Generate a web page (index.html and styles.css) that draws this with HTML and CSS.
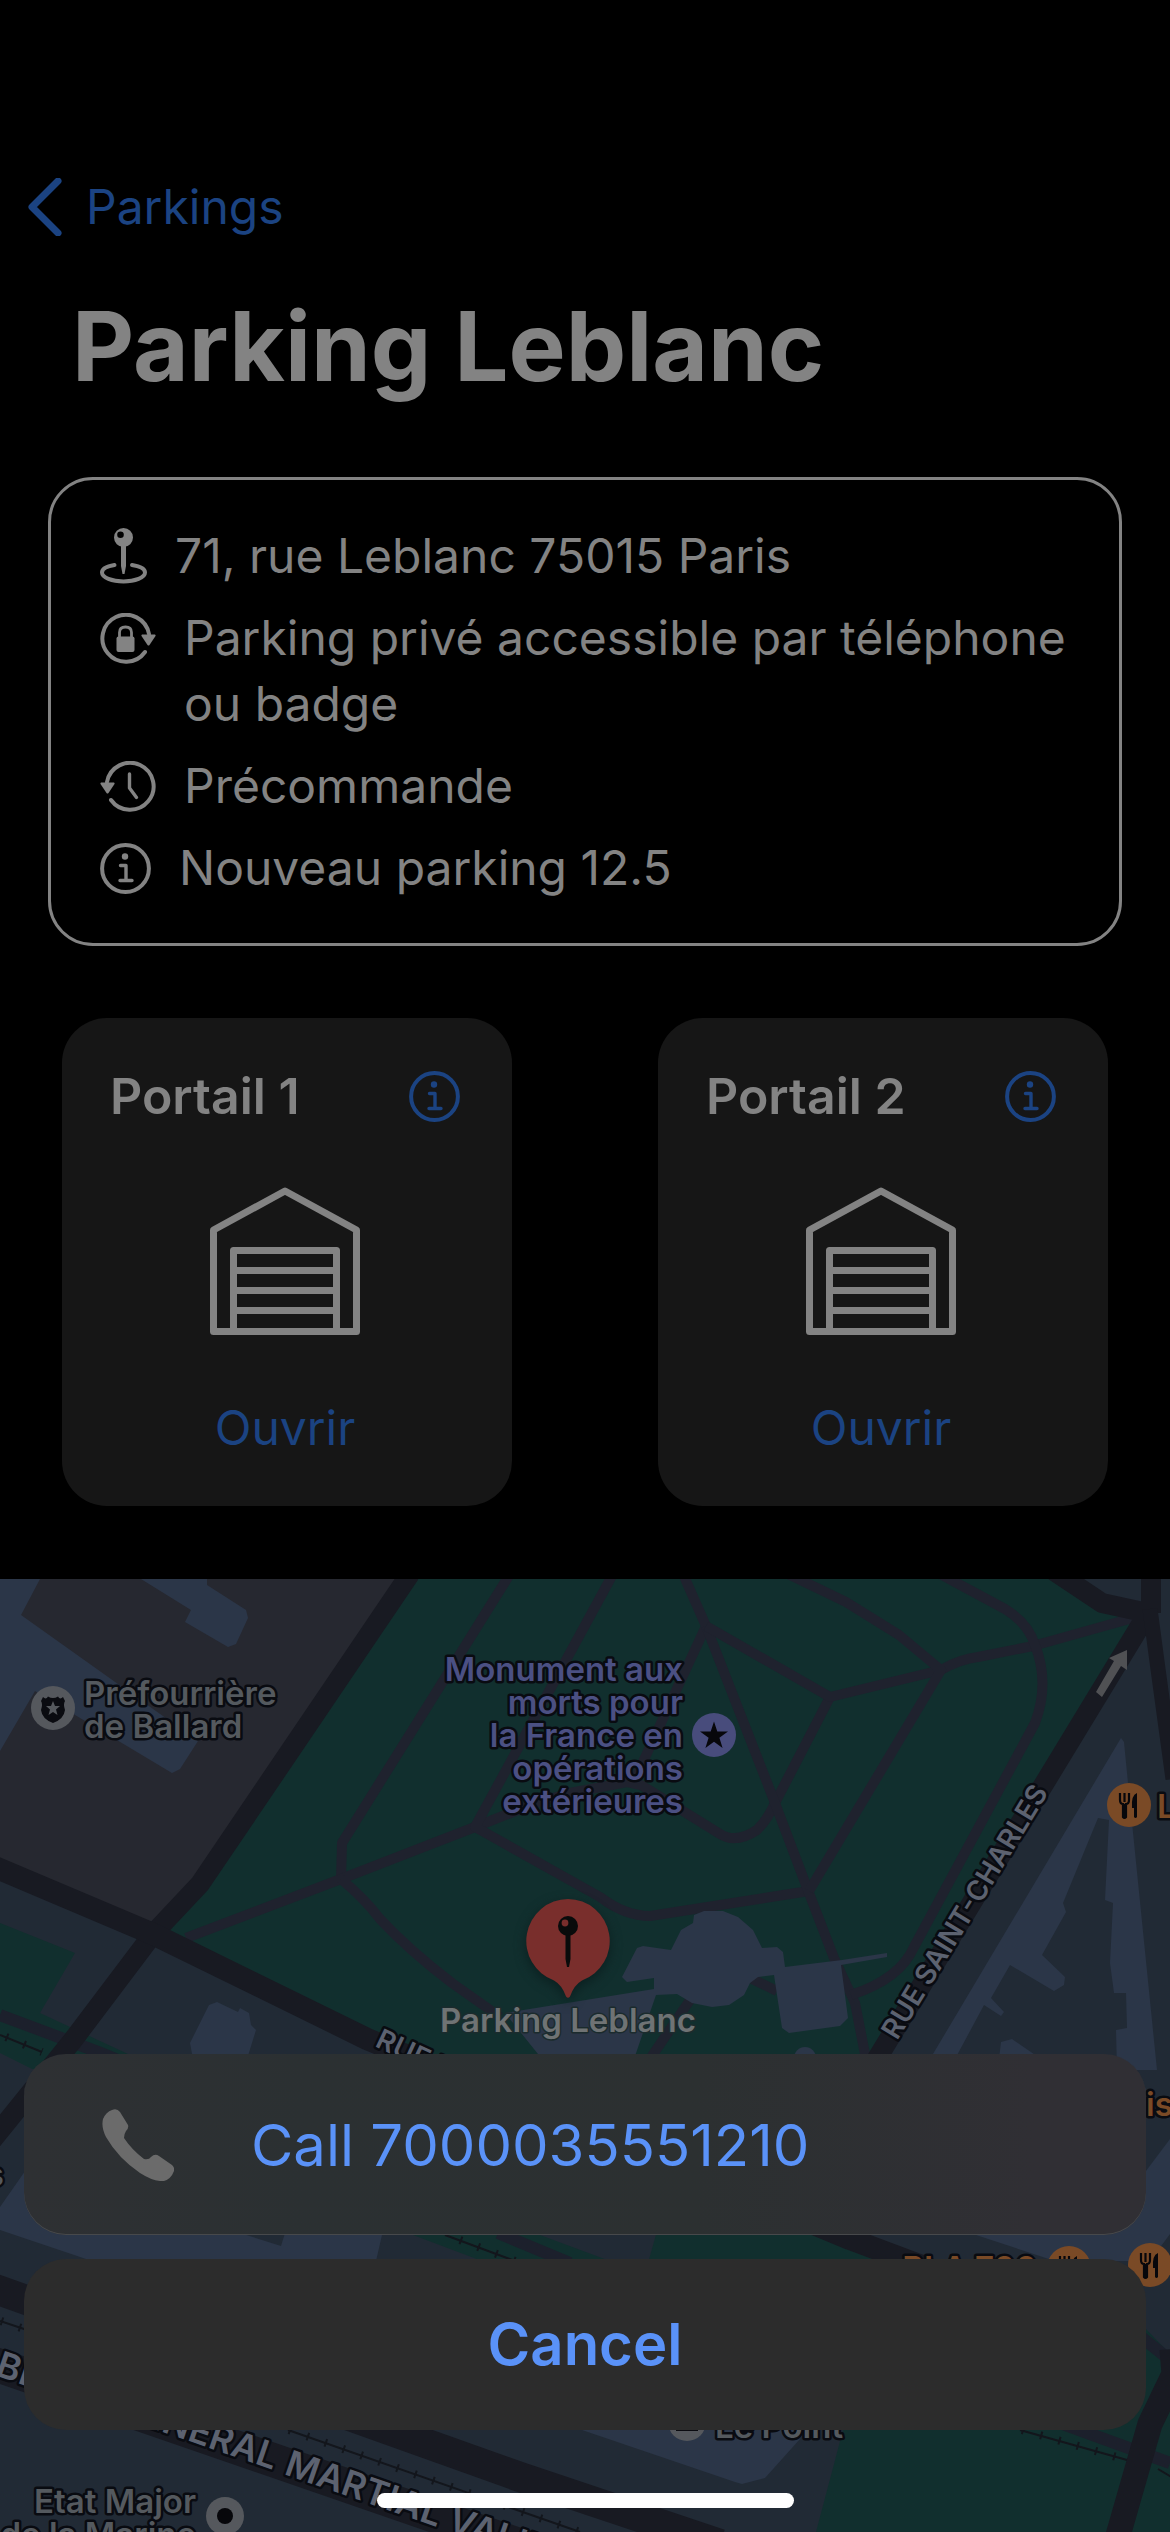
FILE: index.html
```html
<!DOCTYPE html>
<html lang="fr">
<head>
<meta charset="utf-8">
<meta name="viewport" content="width=device-width, initial-scale=1">
<title>Parking Leblanc</title>
<link rel="stylesheet" href="styles.css">
</head>
<body>
<svg class="defs" aria-hidden="true">
  <symbol id="info" viewBox="0 0 51 51">
    <circle cx="25.500" cy="25.500" r="23.400" fill="none" stroke="currentColor" stroke-width="4"/>
    <circle cx="25" cy="13.500" r="3.200" fill="currentColor"/>
    <path d="M20.500 22.500H26V37M20 37.500H32" fill="none" stroke="currentColor" stroke-width="3.400" stroke-linecap="round" stroke-linejoin="round"/>
  </symbol>
  <symbol id="garage" viewBox="0 0 150 150">
    <path d="M3.500 43 75 4 146.500 43V144.500H3.500ZM23.500 144V63.500H126.500V144M23.500 83.500H126.500M23.500 103.500H126.500M23.500 123.500H126.500" fill="none" stroke="currentColor" stroke-width="7" stroke-linejoin="round"/>
  </symbol>
  <symbol id="fork" viewBox="-22 -22 44 44">
    <circle r="22" fill="#7a4a26"/>
    <path d="M-9-12V-5Q-9-1-6-1V12Q-4.500 14-3 12V-1Q0-1 0-5V-12M-4.500-12V-3" fill="none" stroke="#07070b" stroke-width="2.200"/>
    <path d="M-6-1H-3V12Q-4.500 14-6 12ZM8-12V12Q6.500 14 5 12V3H3Q2-10 8-12Z" fill="#07070b"/>
  </symbol>
</svg>

<main class="screen">
  <nav class="nav">
    <a class="back" href="#">
      <svg class="chevron" viewBox="0 0 34 58" aria-hidden="true"><path d="M30 3 4 29 30 55" fill="none" stroke="currentColor" stroke-width="7" stroke-linecap="round" stroke-linejoin="round"/></svg>
      Parkings
    </a>
  </nav>
  <h1 class="title">Parking Leblanc</h1>

  <ul class="details">
    <li class="detail">
      <svg class="icon icon-pin" viewBox="0 0 47 56" aria-hidden="true">
        <path d="M14.500 37C7 38.300 2 41 2 44.500C2 49.500 12 53.500 23.500 53.500S45 49.500 45 44.500C45 41 40 38.300 32 37" fill="none" stroke="currentColor" stroke-width="4" stroke-linecap="round"/>
        <path d="M21 17h5V38L24.500 46h-2L21 38Z" fill="currentColor"/>
        <path fill-rule="evenodd" d="M23.500 0a9.500 9.500 0 1 1 0 19a9.500 9.500 0 0 1 0-19ZM20.500 3.500a3.300 3.300 0 1 0 0 6.600a3.300 3.300 0 0 0 0-6.600Z" fill="currentColor"/>
      </svg>
      <span>71, rue Leblanc 75015 Paris</span>
    </li>
    <li class="detail">
      <svg class="icon icon-wide" viewBox="0 0 56 52" aria-hidden="true">
        <path d="M49 21A23.500 23.500 0 1 0 45 39" fill="none" stroke="currentColor" stroke-width="4" stroke-linecap="round"/>
        <path d="M42 21.500H55Q56 22 55.500 23L49.500 32Q48.500 33 47.500 32L41.500 23Q41 22 42 21.500Z" fill="currentColor"/>
        <rect x="16.500" y="23.500" width="18" height="15.500" rx="2" fill="currentColor"/>
        <path d="M19.500 25V19.500Q19.500 14 25.500 14T31.500 19.500V25" fill="none" stroke="currentColor" stroke-width="2.800"/>
      </svg>
      <span>Parking privé accessible par téléphone ou badge</span>
    </li>
    <li class="detail">
      <svg class="icon icon-wide" viewBox="0 0 56 52" aria-hidden="true">
        <path d="M7 21A23.500 23.500 0 1 1 11 39" fill="none" stroke="currentColor" stroke-width="4" stroke-linecap="round"/>
        <path d="M1 21.500H14Q15 22 14.500 23L8.500 32Q7.500 33 6.500 32L.5 23Q0 22 1 21.500Z" fill="currentColor"/>
        <path d="M29.500 13V27L36.500 36.500" fill="none" stroke="currentColor" stroke-width="3.400" stroke-linecap="round" stroke-linejoin="round"/>
      </svg>
      <span>Précommande</span>
    </li>
    <li class="detail">
      <svg class="icon icon-info" aria-hidden="true"><use href="#info"/></svg>
      <span>Nouveau parking 12.5</span>
    </li>
  </ul>

  <div class="gates">
    <section class="gate">
      <header class="gate-head">
        <h2 class="gate-name">Portail 1</h2>
        <button class="gate-info" type="button" aria-label="Informations Portail 1"><svg class="icon icon-info" aria-hidden="true"><use href="#info"/></svg></button>
      </header>
      <svg class="garage" aria-hidden="true"><use href="#garage"/></svg>
      <button class="open" type="button">Ouvrir</button>
    </section>
    <section class="gate">
      <header class="gate-head">
        <h2 class="gate-name">Portail 2</h2>
        <button class="gate-info" type="button" aria-label="Informations Portail 2"><svg class="icon icon-info" aria-hidden="true"><use href="#info"/></svg></button>
      </header>
      <svg class="garage" aria-hidden="true"><use href="#garage"/></svg>
      <button class="open" type="button">Ouvrir</button>
    </section>
  </div>

  <svg class="map" viewBox="0 0 1170 953" preserveAspectRatio="xMidYMin slice" role="img" aria-label="Plan du quartier">
    <rect width="1170" height="953" fill="#212a35"/>
    <!-- districts -->
    <path fill="#262830" d="M0 0H400L192 304 150 346 0 283Z"/>
    <!-- green areas -->
    <g fill="#112f2e">
      <path d="M418 0H1064L1102 23 1144 34 875 478 560 560 380 460 168 352 208 304Z"/>
      <path d="M0 344 75 374 40 434 70 448 128 475V490H32L0 474Z"/>
      <path d="M413 656H540L610 682H482Z"/>
      <path d="M657 652H805L890 684H648Z"/>
      <path d="M843 851 880 700 1146 750 1170 775V953H816Z"/>
    </g>
    <!-- buildings -->
    <g fill="#2b3648">
      <path d="M0 0H40L21 36 198 162 180 190 172 194 35 112 0 172Z"/>
      <path d="M141 0H207V6L246 31 248 39 236 65 228 68 185 43 191 31Z"/>
      <path d="M209 426 217 423 238 433 240 429 249 434 251 446 256 451 247 480H193L190 464Z"/>
      <path d="M1121 159 1124 163 1128 204 1157 491H1117L1116 451 1127 449 1126 414H1114L1110 384 1113 324 1105 321 1109 241 1098 239 1063 324 1066 333 1042 376 1065 398 1064 406 1054 412 1010 386 991 419 1004 433 1001 437 984 426 955 480H930Z"/>
      <path d="M999 480 1001 463 1012 460 1041 480Z"/>
      <path fill-rule="evenodd" d="M0 628 30 585H400L382 656 376 682H92L0 651ZM240 654 281 667 285 654Z"/>
      <path d="M976 656 1055 682H1150L1170 655V560L1140 600Z"/>
      <path d="M582 851 735 903 742 905 765 899 800 860 806 851Z"/>
    </g>
    <!-- park paths -->
    <g fill="none" stroke="#1f222e" stroke-width="10" stroke-linejoin="round">
      <path d="M510-5 342 264 341 300"/>
      <path d="M186 359 341 300 475 248 536 224 570 214 627 203 641 206 720 255Q736 265 757 251Q768 240 775 224L830 118"/>
      <path d="M613-5 475 248 600 318Q625 337 650 337L809 312"/>
      <path d="M341 300Q365 320 380 340 410 372 452 404L500 438"/>
      <path d="M683-5 706 47 635 200"/>
      <path d="M706 47 775 224 809 314 834 379 855 424 866 480"/>
      <path d="M706 47 830 118 941 91Q960 80 978 78L1033 67 1140 37"/>
      <path d="M788-5 846 23 899 56 941 91 809 312"/>
      <path d="M940-5 1005 30Q1028 44 1035 66 1050 104 1035 144L914 368Q900 400 851 416"/>
      <path d="M692 418 650 480M750 399 777 412"/>
    </g>
    <g fill="none" stroke="#1c202c" stroke-width="12">
      <path d="M0 436 101 474 130 486M498 654 570 684M1140 757 1175 785M1060 844 1170 884"/>
    </g>
    <g fill="#2b3648">
      <path d="M637 369 643 367 671 371 681 351 693 344 694 336 704 332H723L738 338 753 351 762 369 777 368 783 373 785 388 842 381 887 374V378L841 386 848 439 840 447 789 454 782 449 774 396 758 398 750 404 744 416 729 426 712 428 692 424 677 415 656 416 634 480H542L505 434 654 410V399L627 403 622 398Z"/>
      <circle cx="805" cy="479" r="11"/>
    </g>
    <!-- roads -->
    <g fill="none" stroke="#181a22" stroke-width="20" stroke-linejoin="round">
      <path d="M410-5 200 305 153 355 73 461-15 570"/>
      <path stroke-width="22" d="M-10 286 153 355 367 460 850 660 930 690"/>
      <path d="M1054-8 1102 24 1148 34 875 483M1151-5V34"/>
      <path stroke-width="15" d="M1150 30 1158 90 1173 200"/>
      <path stroke-width="30" d="M-10 708 380 848 520 898 720 965"/>
      <path stroke-width="34" d="M-20 780 600 994"/>
      <path stroke-width="25" d="M1172 770 1174 795 1150 845 1117 960"/>
    </g>
    <!-- railway -->
    <g fill="none" stroke="#13161c">
      <path stroke-width="2" d="M0 456 42 473M0 742 30 752M288 851 580 953M445 656 515 682M1020 851 1127 881M1158 890 1175 900"/>
      <path stroke-width="8" stroke-dasharray="2 17" d="M6 458 42 473M1 742 30 752M289 851 580 953M460 661 515 682M1022 851 1127 881"/>
    </g>
    <!-- one-way arrow -->
    <path fill="#505154" d="M1096 113 1114 82 1109 79 1127 71 1127 91 1121 87 1102 118Z"/>

    <g class="label label-road">
      <text transform="translate(897 462) rotate(-58.600)" class="street-small">RUE SAINT-CHARLES</text>
      <text transform="translate(374 467) rotate(25)" class="street-small">RUE LEBLANC</text>
      <text transform="translate(-6 796) rotate(19)" class="street-large">BLVD</text>
      <text transform="translate(283 895) rotate(19)" class="street-large">MARTIAL VALIN</text>
      <text transform="translate(273 891) rotate(19)" class="street-large" text-anchor="end">GÉNÉRAL</text>
    </g>
    <g class="label label-grey">
      <text x="84" y="126">Préfourrière</text><text x="84" y="159">de Ballard</text>
      <text x="4" y="607" text-anchor="end">s</text>
      <text x="715" y="859">Le Point</text>
      <text x="196" y="934" text-anchor="end">Etat Major</text>
      <text x="196" y="967" text-anchor="end">de la Marine</text>
    </g>
    <g class="label label-purple" text-anchor="end">
      <text x="683" y="102">Monument aux</text><text x="683" y="135">morts pour</text><text x="683" y="168">la France en</text><text x="683" y="201">opérations</text><text x="683" y="234">extérieures</text>
    </g>
    <g class="label label-orange">
      <text x="1157" y="239">Le</text><text x="1146" y="537">is</text><text x="1037" y="701" text-anchor="end">BLA 700</text>
    </g>
    <!-- places -->
    <circle cx="53" cy="129" r="22" fill="#55585d"/>
    <path fill="#0a0b10" d="M43 118Q46 121 48 117.500Q53 120.500 58 117.500Q60 121 63 118L65 122Q63 125 65 131Q64 140 53 144Q42 140 41 131Q43 125 41 122Z"/>
    <path fill="#55585d" d="m53 122 2 5h5l-4 3.500 1.500 5.500-4.500-3-4.500 3 1.500-5.500-4-3.500h5Z"/>
    <circle cx="714" cy="156" r="22" fill="#484c7c"/>
    <path fill="#07070b" d="m714 142.500 3.300 10h10.700l-8.600 6.300 3.200 10.200-8.600-6.200-8.600 6.200 3.200-10.200-8.600-6.300h10.700Z"/>
    <circle cx="225" cy="937" r="19" fill="#55585d"/><circle cx="225" cy="937" r="8" fill="#07070b"/>
    <circle cx="687" cy="843" r="19" fill="#55585d"/><path d="M676 850h22" stroke="#0a0b10" stroke-width="4"/>
    <use href="#fork" x="1107" y="204" width="44" height="44"/>
    <use href="#fork" x="1128" y="664" width="44" height="44"/>
    <use href="#fork" x="1047" y="667" width="44" height="44"/>
    <!-- selected place -->
    <path class="marker" d="M568 320A42 42 0 0 1 582 401.500Q574 406 570 417.500Q568 420 566 417.500Q562 406 554 401.500A42 42 0 0 1 568 320Z"/>
    <path fill="#090b0b" d="M565.500 355h5V380L569 388h-2L565.500 380Z"/><circle cx="568" cy="347" r="10" fill="#090b0b"/><circle cx="565" cy="344" r="3.400" fill="#792e2c"/>
    <text class="label label-selected" x="568" y="453" text-anchor="middle">Parking Leblanc</text>
  </svg>
</main>

<div class="sheet" role="dialog" aria-label="Call">
  <button class="action call" type="button">
    <svg class="phone" viewBox="0 0 72 72" aria-hidden="true"><path fill="currentColor" d="M1 10Q4 3 10 1Q15-1 18 3L26 16Q27 19 24 22Q22 25 22 29Q30 41 42 50Q47 51 49 48Q53 44 57 47L70 56Q73 59 72 62Q69 70 62 72Q52 73 38 64Q16 49 4 28Q-1 18 1 10Z"/></svg>
    <span>Call 7000035551210</span>
  </button>
  <button class="action cancel" type="button">Cancel</button>
  <div class="home-bar"></div>
</div>
</body>
</html>
```

FILE: styles.css
```css
:root {
  --text: #838383;
  --link: #1b4382;
  --action: #5a92f8;
}

* {
  box-sizing: border-box;
}

body {
  margin: 0;
  background: #000;
  color: var(--text);
  font-family: Inter, "Liberation Sans", sans-serif;
  font-size: 48px;
  line-height: 66px;
}

button {
  border: 0;
  padding: 0;
  background: none;
  color: inherit;
  font: inherit;
  cursor: pointer;
}

.defs {
  display: none;
}

.screen {
  display: flex;
  flex-direction: column;
  min-height: 100vh;
}

.nav {
  display: flex;
  padding: 174px 28px 0;
}

.back {
  display: flex;
  align-items: center;
  gap: 24px;
  color: var(--link);
  text-decoration: none;
}

.chevron {
  width: 34px;
  height: 58px;
}

.title {
  margin: 46px 72px 0;
  font-size: 96px;
  font-weight: 700;
  line-height: 120px;
}

.details {
  display: flex;
  flex-direction: column;
  gap: 16px;
  margin: 71px 48px 0;
  padding: 43px 44px 42px 49px;
  border: 3px solid var(--text);
  border-radius: 45px;
  list-style: none;
}

.detail {
  display: flex;
  gap: 28px;
}

.icon {
  flex: none;
  display: block;
}

.icon-pin {
  width: 47px;
  height: 56px;
  margin-top: 5px;
}

.icon-wide {
  width: 56px;
  height: 52px;
  margin-top: 8px;
}

.icon-info {
  width: 51px;
  height: 51px;
}

.detail .icon-info {
  margin-top: 8px;
}

.gates {
  display: grid;
  grid-template-columns: 1fr 1fr;
  gap: 146px;
  margin: 72px 62px 73px;
}

.gate {
  display: flex;
  flex-direction: column;
  align-items: center;
  padding: 45px 52px 45px 48px;
  border-radius: 45px;
  background: #161616;
}

.gate-head {
  display: flex;
  align-items: center;
  justify-content: space-between;
  align-self: stretch;
}

.gate-name {
  margin: 0;
  font-size: 50px;
  font-weight: 600;
}

.gate-info {
  color: var(--link);
}

.garage {
  width: 150px;
  height: 150px;
  margin: 58px 0;
}

.open {
  color: var(--link);
}

.map {
  flex: 1 0 953px;
  width: 100%;
  min-height: 0;
  display: block;
}

.label {
  font-size: 33px;
  font-weight: 600;
  stroke: #090b11;
  stroke-width: 5px;
  stroke-linejoin: round;
  paint-order: stroke;
}

.label-grey {
  fill: #54595e;
}

.label-purple {
  fill: #4b5083;
}

.label-orange {
  fill: #7a4a26;
}

.label-selected {
  fill: #6f7374;
  stroke: #1b2b2d;
  stroke-width: 3px;
}

.label-road {
  fill: #5c6270;
}

.street-small {
  font-size: 28px;
}

.street-large {
  font-size: 36px;
}

.marker {
  fill: #792e2c;
  filter: drop-shadow(0 4px 6px #0a1f1f);
}

.sheet {
  position: fixed;
  right: 24px;
  bottom: 24px;
  left: 24px;
  display: flex;
  flex-direction: column;
  align-items: center;
  gap: 24px;
}

.action {
  width: 100%;
  border-radius: 42px;
  color: var(--action);
  font-size: 58px;
}

.call {
  display: flex;
  align-items: center;
  gap: 77px;
  padding: 55px 78px 54px;
  background: linear-gradient(90deg, #2e3033, #2b3032 25%, #2c3031 60%, #302f34 90%);
  box-shadow: inset 0 -1px #47494b;
}

.phone {
  width: 72px;
  height: 72px;
  color: #6b6b6b;
}

.cancel {
  padding: 52px 0 53px;
  background: #2c2c2c;
  font-weight: 600;
}

.home-bar {
  width: 417px;
  height: 15px;
  margin-top: 39px;
  border-radius: 8px;
  background: #fff;
}
```
